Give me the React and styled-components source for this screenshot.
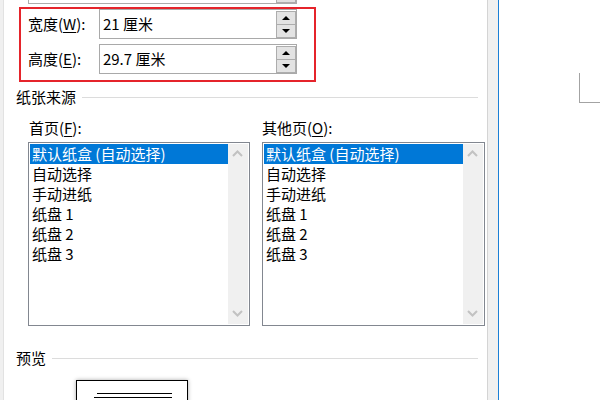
import React from "react";
import styled, { createGlobalStyle } from "styled-components";

const Global = createGlobalStyle`
  html, body { margin: 0; padding: 0; background: #fff; }
  body {
    width: 600px; height: 400px; overflow: hidden;
    font-family: "Noto Sans CJK SC", "Noto Sans", sans-serif;
    font-size: 15px; color: #000;
  }
  u { text-decoration-thickness: 1px; text-underline-offset: 2px; }
`;

const Screen = styled.div`
  display: flex;
  width: 600px;
  height: 400px;
  overflow: hidden;
`;

const LeftEdge = styled.div`
  width: 3px;
  background: #f0f0f0;
  border-right: 1px solid #e2e2e2;
`;

const Dialog = styled.div`
  width: 489px;
  display: flex;
  flex-direction: column;
  background: #fff;
  & > * { flex-shrink: 0; }
`;

const TopSelect = styled.div`
  margin-left: 24px;
  width: 269px;
  height: 4px;
  box-sizing: border-box;
  border: 1px solid #acacac;
  border-top: none;
  display: flex;
  justify-content: flex-end;
`;

const TopSelectButton = styled.div`
  width: 20px;
  height: 3px;
  box-sizing: border-box;
  background: #e1e1e1;
  border: 1px solid #adadad;
  border-top: none;
`;

const Highlight = styled.div`
  margin: 3px 0 0 15px;
  width: 297px;
  height: 75px;
  box-sizing: border-box;
  border: 2px solid #e5242b;
  padding: 0 0 0 7px;
  display: grid;
  grid-template-columns: 71px 198px;
  grid-template-rows: 30px 30px;
  row-gap: 5px;
`;

const FieldLabel = styled.div`
  display: flex;
  align-items: center;
  line-height: 20px;
`;

const SpinInput = styled.div`
  display: flex;
  box-sizing: border-box;
  height: 30px;
  border: 1px solid #a9a9a9;
  background: #fff;
`;

const SpinValue = styled.div`
  flex: 1;
  padding-left: 3px;
  display: flex;
  align-items: center;
  line-height: 20px;
  padding-bottom: 1px;
`;

const SpinColumn = styled.div`
  width: 20px;
  display: flex;
  flex-direction: column;
  padding-top: 1px;
`;

const SpinButton = styled.div`
  flex: 1;
  box-sizing: border-box;
  background: #e3e3e3;
  border: 1px solid #adadad;
  & + & { border-top: none; }
  display: flex;
  align-items: center;
  justify-content: center;
  &::after {
    content: "";
    width: 0; height: 0;
    border-left: 4px solid transparent;
    border-right: 4px solid transparent;
    ${(p) => (p.$down ? "border-top: 4px solid #000;" : "border-bottom: 4px solid #000;")}
  }
`;

const SectionHead = styled.div`
  display: flex;
  align-items: center;
  height: 20px;
  margin-top: ${(p) => p.$top}px;
  padding-left: 12px;
  padding-right: 9px;
  gap: 6px;
  line-height: 20px;
  &::after {
    content: "";
    flex: 1;
    height: 1px;
    background: #dcdcdc;
  }
`;

const Columns = styled.div`
  display: grid;
  grid-template-columns: 222px 223px;
  column-gap: 12px;
  margin: 11px 0 0 24px;
`;

const Column = styled.div`
  display: flex;
  flex-direction: column;
  gap: 4px;
`;

const ColLabel = styled.div`
  height: 20px;
  line-height: 20px;
  padding-left: ${(p) => p.$indent || 0}px;
`;

const ListBox = styled.div`
  height: 184px;
  box-sizing: border-box;
  border: 1px solid #828790;
  padding: 1px;
  display: flex;
`;

const ListItems = styled.div`
  flex: 1;
  display: flex;
  flex-direction: column;
`;

const ListItem = styled.div`
  height: 20px;
  line-height: 20px;
  padding-left: 2px;
  white-space: nowrap;
  background: ${(p) => (p.$selected ? "#0078d7" : "transparent")};
  color: ${(p) => (p.$selected ? "#fff" : "#000")};
`;

const ScrollTrack = styled.div`
  width: 20px;
  background: #f0f0f0;
  display: flex;
  flex-direction: column;
  justify-content: space-between;
  align-items: center;
  padding: 6px 0 7px;
`;

const PreviewPage = styled.div`
  margin: 12px 0 0 72px;
  width: 112px;
  height: 100px;
  box-sizing: border-box;
  border: 1px solid #000;
  box-shadow: 0 0 4px rgba(0, 0, 0, 0.35);
  background: #fff;
  padding: 12px 0 0 16px;
  display: flex;
  flex-direction: column;
  gap: 3px;
`;

const PreviewLine = styled.div`
  height: 1px;
  background: #000;
  width: ${(p) => p.$w}px;
  margin-left: ${(p) => p.$ml || 0}px;
`;

const Splitter = styled.div`
  width: 10px;
  background: #f0f0f0;
  border-left: 1px solid #d4d4d4;
  border-right: 1px solid #1a7fd6;
`;

const PageArea = styled.div`
  flex: 1;
  background: #fff;
  padding: 73px 0 0 80px;
`;

const CornerMark = styled.div`
  width: 20px;
  height: 29px;
  border-left: 1px solid #a3a3a3;
  border-bottom: 1px solid #a3a3a3;
`;

const Chevron = ({ down }) => (
  <svg width="11" height="7" viewBox="0 0 11 7">
    <polyline
      points={down ? "1,1 5.5,5.5 10,1" : "1,6 5.5,1.5 10,6"}
      fill="none"
      stroke="#c2c2c2"
      strokeWidth="2"
    />
  </svg>
);

const trays = ["默认纸盒 (自动选择)", "自动选择", "手动进纸", "纸盘 1", "纸盘 2", "纸盘 3"];

const TrayList = ({ withScroll }) => (
  <ListBox>
    <ListItems>
      {trays.map((t, i) => (
        <ListItem key={t} $selected={i === 0}>{t}</ListItem>
      ))}
    </ListItems>
    {withScroll && (
      <ScrollTrack>
        <Chevron />
        <Chevron down />
      </ScrollTrack>
    )}
  </ListBox>
);

const Spin = ({ value }) => (
  <SpinInput>
    <SpinValue>{value}</SpinValue>
    <SpinColumn>
      <SpinButton />
      <SpinButton $down />
    </SpinColumn>
  </SpinInput>
);

export default function App() {
  return (
    <>
      <Global />
      <Screen>
        <LeftEdge />
        <Dialog>
          <TopSelect>
            <TopSelectButton />
          </TopSelect>
          <Highlight>
            <FieldLabel>宽度(<u>W</u>):</FieldLabel>
            <Spin value="21 厘米" />
            <FieldLabel>高度(<u>E</u>):</FieldLabel>
            <Spin value="29.7 厘米" />
          </Highlight>
          <SectionHead $top={5}>纸张来源</SectionHead>
          <Columns>
            <Column>
              <ColLabel $indent={1}>首页(<u>F</u>):</ColLabel>
              <TrayList withScroll />
            </Column>
            <Column>
              <ColLabel>其他页(<u>O</u>):</ColLabel>
              <TrayList withScroll />
            </Column>
          </Columns>
          <SectionHead $top={22}>预览</SectionHead>
          <PreviewPage>
            <PreviewLine $w={75} $ml={4} />
            <PreviewLine $w={78} $ml={1} />
          </PreviewPage>
        </Dialog>
        <Splitter />
        <PageArea>
          <CornerMark />
        </PageArea>
      </Screen>
    </>
  );
}
